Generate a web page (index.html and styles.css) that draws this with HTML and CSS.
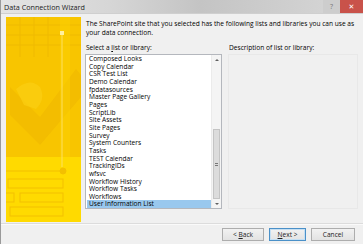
FILE: index.html
```html
<!DOCTYPE html>
<html>
<head>
<meta charset="utf-8">
<link rel="stylesheet" href="styles.css">
</head>
<body>
<div class="window">
  <div class="titlebar">
    <span class="title">Data Connection Wizard</span>
    <span class="title-blur"></span>
    <span class="tb-btn help">?</span>
    <span class="tb-btn close">✕</span>
  </div>
  <div class="body">
    <div class="art">
      <svg width="75" height="205" viewBox="0 0 75 205">
        <rect width="75" height="205" fill="#f8c500"/>
        <g stroke="#efba00" stroke-width="1">
          <line x1="0" y1="8" x2="75" y2="8"/>
          <line x1="0" y1="18" x2="75" y2="18"/>
          <line x1="0" y1="28" x2="75" y2="28"/>
          <line x1="14" y1="0" x2="14" y2="40"/>
          <line x1="28" y1="0" x2="28" y2="40"/>
          <line x1="42" y1="0" x2="42" y2="40"/>
        </g>
        <path d="M4 70 L34 100 L70 52 L75 58 L75 80 L34 128 L4 98 Z" fill="#f1ba00" opacity="0.8"/>
        <path d="M10 72 Q24 60 34 70 Q40 82 30 92 L18 88 Z" fill="#fbcf12" opacity="0.7"/>
        <rect x="54" y="0" width="10" height="205" fill="#fcd200" opacity="0.5"/>
        <rect x="0" y="140" width="75" height="65" fill="#ffda00"/>
        <rect x="54" y="14" width="4" height="4" fill="#fff0a0"/>
        <line x1="56" y1="18" x2="56" y2="150" stroke="#fde060" stroke-width="1"/>
        <g fill="none" stroke="#f3c000" stroke-width="1">
          <line x1="0" y1="154" x2="54" y2="154"/>
          <circle cx="57" cy="154" r="3" fill="#f3c000"/>
          <rect x="2" y="162" width="55" height="9"/>
          <rect x="-2" y="176" width="10" height="9"/>
          <rect x="14" y="176" width="43" height="9"/>
          <rect x="4" y="190" width="53" height="9"/>
        </g>
      </svg>
    </div>
    <div class="main">
      <p class="intro">The SharePoint site that you selected has the following lists and libraries you can use as your data connection.</p>
      <div class="cols">
        <div class="col">
          <div class="label">Select a <u>l</u>ist or library:</div>
          <div class="listbox">
            <ul class="items">
              <li>Composed Looks</li>
              <li>Copy Calendar</li>
              <li>CSR Test List</li>
              <li>Demo Calendar</li>
              <li>fpdatasources</li>
              <li>Master Page Gallery</li>
              <li>Pages</li>
              <li>ScriptLib</li>
              <li>Site Assets</li>
              <li>Site Pages</li>
              <li>Survey</li>
              <li>System Counters</li>
              <li>Tasks</li>
              <li>TEST Calendar</li>
              <li>TrackingIDs</li>
              <li>wfsvc</li>
              <li>Workflow History</li>
              <li>Workflow Tasks</li>
              <li>Workflows</li>
              <li class="selected">User Information List</li>
            </ul>
            <div class="scrollbar">
              <span class="arrow up"></span>
              <span class="track"><span class="thumb"><span class="grip"></span></span></span>
              <span class="arrow down"></span>
            </div>
          </div>
        </div>
        <div class="col desc-col">
          <div class="label">Description of list or library:</div>
          <div class="desc"></div>
        </div>
      </div>
    </div>
  </div>
  <div class="footer">
    <button class="btn back">&lt; <u>B</u>ack</button>
    <button class="btn next default"><u>N</u>ext &gt;</button>
    <button class="btn cancel">Cancel</button>
  </div>
</div>
</body>
</html>
```

FILE: styles.css
```css
* { box-sizing: border-box; }
html, body { margin: 0; padding: 0; }
body {
  width: 363px;
  height: 244px;
  overflow: hidden;
  background: #f0f0f0;
  font-family: "Open Sans", "DejaVu Sans", sans-serif;
  font-size: 6.6px;
  color: #000;
}
.window {
  height: 244px;
  border-left: 1px solid #9a9a9a;
  display: flex;
  flex-direction: column;
}
.titlebar {
  height: 14px;
  display: flex;
  align-items: center;
  background: linear-gradient(90deg, #e4e4e4 0%, #d6d6d6 30%, #c4c4c4 55%, #cfcfcf 80%, #d8d8d8 100%);
  border-bottom: 1px solid #cfcfcf;
}
.title {
  padding-left: 3px;
  font-size: 7.2px;
  color: #222;
  white-space: nowrap;
}
.title-blur { flex: 1; }
.tb-btn {
  height: 13px;
  display: flex;
  align-items: center;
  justify-content: center;
  align-self: flex-start;
  font-size: 7px;
}
.help { width: 17px; color: #777; background: #cdcdcd; }
.close { width: 23px; color: #fff; background: #c9524a; font-size: 7px; }
.body {
  display: flex;
  padding: 3px 0 0 5px;
  height: 208px;
}
.art { width: 75px; height: 205px; flex: none; }
.art svg { display: block; }
.main { flex: 1; padding-left: 4px; }
.intro {
  margin: 1.5px 0 0 1px;
  line-height: 9px;
  width: 275px;
}
.cols {
  display: flex;
  gap: 6px;
  margin-top: 6px;
}
.col { width: 137px; flex: none; }
.desc-col { width: 130px; }
.label { line-height: 9px; padding-left: 1px; }
.listbox {
  margin-top: 2.5px;
  height: 155px;
  border: 1px solid #b4b7bd;
  background: #fff;
  display: flex;
}
.items {
  list-style: none;
  margin: 0;
  padding: 0;
  flex: 1;
}
.items li {
  height: 7.67px;
  line-height: 7.67px;
  padding-left: 3px;
  white-space: nowrap;
}
.items li.selected { background: #99c8ee; margin-left: 1px; padding-left: 2px; }
.scrollbar {
  width: 10px;
  display: flex;
  flex-direction: column;
  background: #f4f4f4;
  border-left: 1px solid #ebebeb;
}
.arrow { height: 9px; display: flex; justify-content: center; align-items: center; }
.arrow::after {
  content: "";
  border-left: 2px solid transparent;
  border-right: 2px solid transparent;
}
.arrow.up::after { border-bottom: 2px solid #606060; }
.arrow.down::after { border-top: 2px solid #606060; }
.track { flex: 1; display: flex; flex-direction: column; justify-content: flex-end; padding: 0 1px; }
.thumb {
  height: 70px;
  background: #dcdcdc;
  border: 1px solid #c4c4c4;
  display: flex;
  align-items: center;
  justify-content: center;
}
.grip {
  width: 3px;
  height: 3px;
  border-top: 1px solid #777;
  border-bottom: 1px solid #777;
}
.desc {
  margin-top: 2.5px;
  height: 155px;
  border: 1px solid #e8e8e8;
}
.footer {
  margin-top: 1px;
  border-top: 1px solid #dcdcdc;
  box-shadow: inset 0 1px 0 #fafafa;
  display: flex;
  justify-content: flex-end;
  padding: 4px 8px 0 0;
  gap: 5px;
}
.btn {
  font-family: inherit;
  font-size: 6.6px;
  height: 13px;
  width: 42px;
  padding: 0;
  background: linear-gradient(#f2f2f2, #e2e2e2);
  border: 1px solid #adadad;
  color: #222;
  line-height: 11px;
}
.btn.next { width: 37px; }
.btn.cancel { width: 44px; }
.btn.default { border-color: #4a90c8; box-shadow: inset 0 0 0 1px #c5dff3; }
```
